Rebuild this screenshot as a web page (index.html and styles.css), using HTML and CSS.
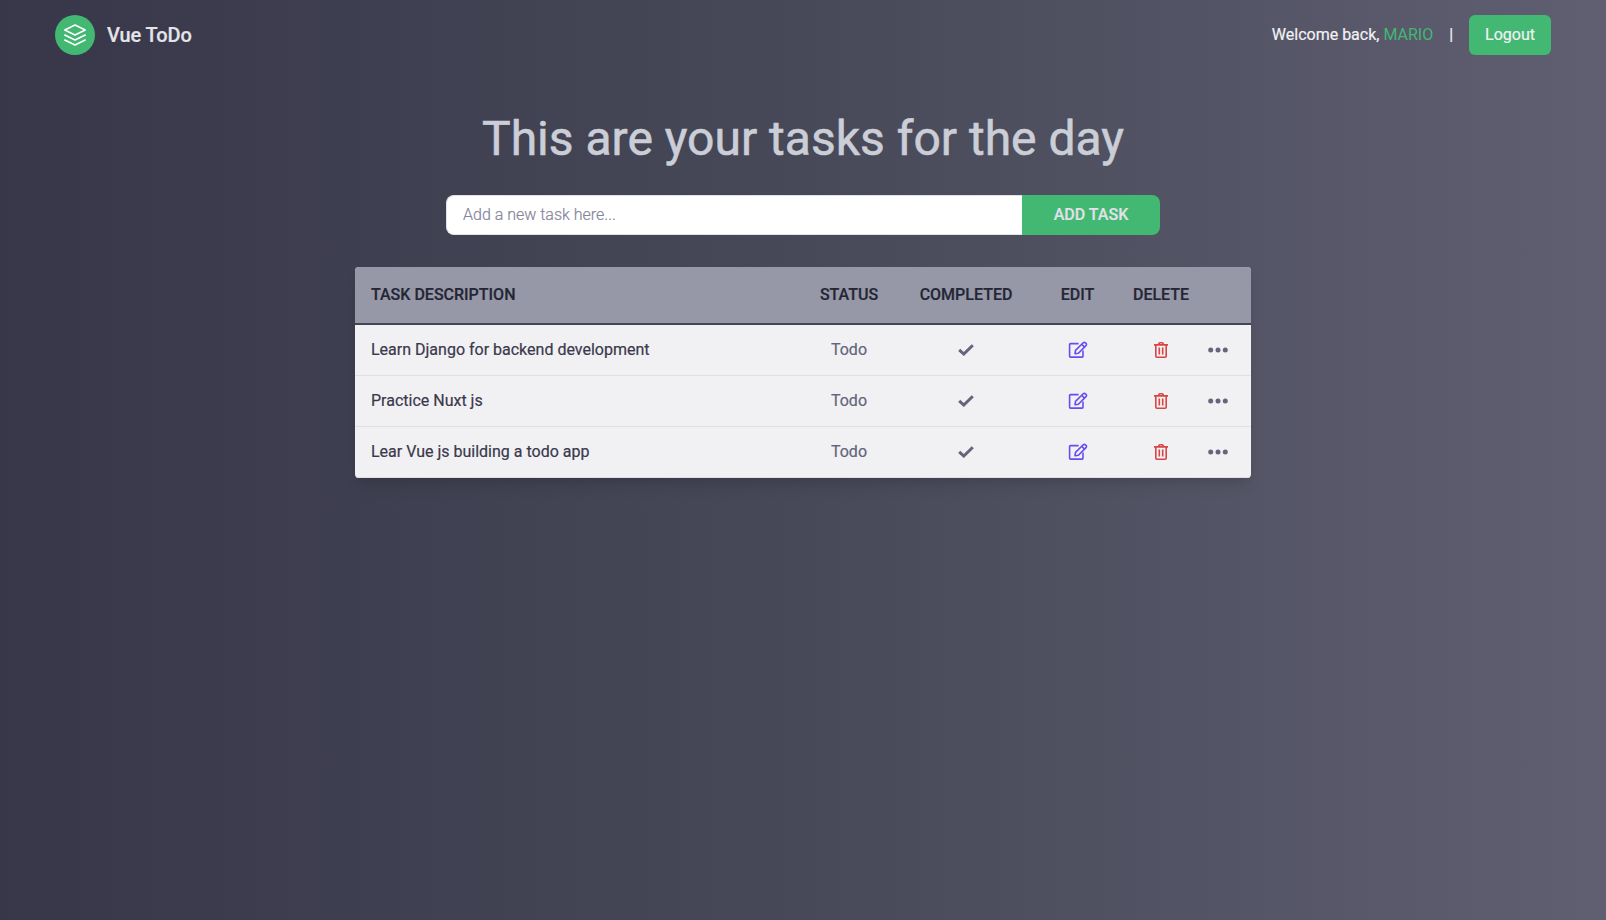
FILE: index.html
```html
<!DOCTYPE html>
<html lang="en">
<head>
<meta charset="utf-8">
<title>Vue ToDo</title>
<link rel="stylesheet" href="styles.css">
</head>
<body>
<svg class="sprite" aria-hidden="true">
  <symbol id="tick" viewBox="0 0 16 12"><path fill="none" stroke="currentColor" stroke-width="3" d="M1.2 5.8 L5.8 10 L14.8 1.2"/></symbol>
  <symbol id="edit" viewBox="0 0 20 18"><g fill="none" stroke="currentColor" stroke-width="1.6" stroke-linejoin="round"><path d="M10.6 2.6H2.5q-.9 0-.9.9v11.7q0 .9.9.9h11.6q.9 0 .9-.9V9.6"/><path d="M7 12.7l.5-3.3 7.7-7.6q1.1-1 2.2 0l.6.6q1.1 1.1 0 2.2l-7.6 7.6z"/><path d="M13.7 3.3l2.8 2.8"/></g></symbol>
  <symbol id="trash" viewBox="0 0 14 16"><g fill="none" stroke="currentColor" stroke-width="1.6"><path d="M0 2.9h14M1.8 3v11.1q0 1.1 1.1 1.1h8.2q1.1 0 1.1-1.1V3M4.3 2.8l.7-1.4q.3-.6 1-.6h2q.7 0 1 .6l.7 1.4M5.3 5.6v7M8.7 5.6v7"/></g></symbol>
  <symbol id="more" viewBox="0 0 20 6"><g fill="currentColor"><circle cx="2.7" cy="3" r="2.5"/><circle cx="10" cy="3" r="2.5"/><circle cx="17.3" cy="3" r="2.5"/></g></symbol>
</svg>
<header class="header">
  <div class="brand">
    <span class="logo"><svg viewBox="0 0 24 24"><path d="M12 2 1.8 7l10.2 5 10.2-5zM1.8 12l10.2 5 10.2-5M1.8 17l10.2 5 10.2-5"/></svg></span>
    <span class="brand-name">Vue ToDo</span>
  </div>
  <nav class="nav">
    <span class="welcome">Welcome back, <span class="user">MARIO</span></span>
    <span class="divider">|</span>
    <button class="logout">Logout</button>
  </nav>
</header>
<main class="main">
  <h1 class="title">This are your tasks for the day</h1>
  <form class="form">
    <input class="input" type="text" placeholder="Add a new task here...">
    <button class="add" type="button">ADD TASK</button>
  </form>
  <section class="table">
    <div class="row head"><span>TASK DESCRIPTION</span><span>STATUS</span><span>COMPLETED</span><span>EDIT</span><span>DELETE</span><span></span></div>
    <div class="row"><span class="task">Learn Django for backend development</span><span class="status">Todo</span><span><svg class="tick"><use href="#tick"/></svg></span><span><svg class="edit"><use href="#edit"/></svg></span><span><svg class="trash"><use href="#trash"/></svg></span><span><svg class="more"><use href="#more"/></svg></span></div>
    <div class="row"><span class="task">Practice Nuxt js</span><span class="status">Todo</span><span><svg class="tick"><use href="#tick"/></svg></span><span><svg class="edit"><use href="#edit"/></svg></span><span><svg class="trash"><use href="#trash"/></svg></span><span><svg class="more"><use href="#more"/></svg></span></div>
    <div class="row"><span class="task">Lear Vue js building a todo app</span><span class="status">Todo</span><span><svg class="tick"><use href="#tick"/></svg></span><span><svg class="edit"><use href="#edit"/></svg></span><span><svg class="trash"><use href="#trash"/></svg></span><span><svg class="more"><use href="#more"/></svg></span></div>
  </section>
</main>
</body>
</html>
```
FILE: styles.css
```css
* { box-sizing: border-box; }
body {
  margin: 0;
  min-height: 100vh;
  font: 400 16px/24px Roboto, sans-serif;
  -webkit-text-stroke-width: 0.2px;
  color: #f1f1f4;
  background: linear-gradient(to right, #373749, #474858, #5f5f71);
}
.sprite { display: none; }
button, input { font: inherit; border: 0; margin: 0; }
.header {
  display: flex;
  justify-content: space-between;
  align-items: center;
  height: 70px;
  padding: 0 55px;
}
.brand, .nav { display: flex; align-items: center; }
.brand { gap: 12px; }
.logo {
  display: grid;
  place-items: center;
  width: 40px;
  height: 40px;
  border-radius: 50%;
  background: #42b873;
}
.logo svg {
  width: 24px;
  height: 24px;
  fill: none;
  stroke: #fff;
  stroke-width: 1.6;
  stroke-linecap: round;
  stroke-linejoin: round;
}
.brand-name { font-size: 20px; font-weight: 500; letter-spacing: -0.1px; color: #e4e4ea; }
.user { color: #42b873; -webkit-text-stroke-width: 0; }
.divider { margin: 0 16px; }
.logout {
  height: 40px;
  padding: 0 16px;
  border-radius: 6px;
  background: #42b873;
  color: #f1f1f4;
}
.main { display: flex; flex-direction: column; align-items: center; }
.title {
  margin: 45px 0 32px;
  font-size: 48px;
  line-height: 48px;
  font-weight: 400;
  -webkit-text-stroke-width: 0.6px;
  color: #cbced6;
}
.form { display: flex; width: 714px; height: 40px; margin-bottom: 32px; }
.input {
  flex: 1;
  padding: 0 16px;
  border: 1px solid #e1e1e8;
  border-right: 0;
  border-radius: 8px 0 0 8px;
  background: #fff;
  font-weight: 300;
}
.input::placeholder { color: #85859a; opacity: 1; }
.add {
  width: 138px;
  border-radius: 0 8px 8px 0;
  background: #42b873;
  color: #e1e1e8;
  font-weight: 500;
}
.table {
  width: 896px;
  overflow: hidden;
  border-radius: 4px;
  background: #f1f1f4;
  color: #64647a;
  box-shadow: 0 10px 15px -3px rgba(0,0,0,.1), 0 4px 6px -2px rgba(0,0,0,.05);
}
.row {
  display: grid;
  grid-template-columns: 448px 92px 142px 81px 86px 47px;
  align-items: center;
  justify-items: center;
  height: 51px;
  border-bottom: 1px solid #dfe0e6;
}
.row > :first-child { justify-self: start; padding-left: 16px; }
.row > :last-child { justify-self: start; padding-left: 4px; }
.head {
  height: 58px;
  border-bottom: 2px solid #444456;
  background: #9698a7;
  color: #252635;
  font-weight: 500;
}
.task { color: #3a394b; }
.row svg { display: block; }
.tick { width: 16px; height: 12px; }
.edit { width: 20px; height: 18px; color: #654df0; }
.trash { width: 14px; height: 16px; color: #d94444; }
.more { width: 20px; height: 6px; }
```
